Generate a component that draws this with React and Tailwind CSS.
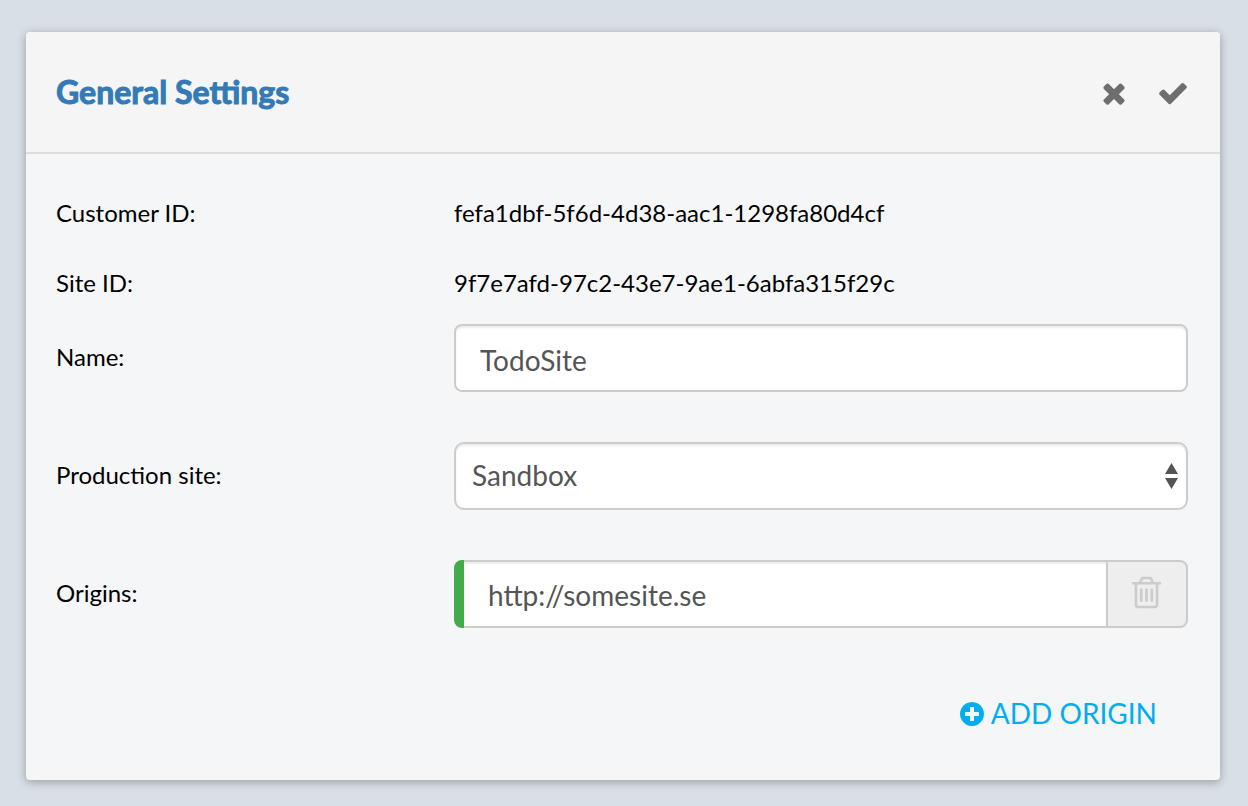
import { useState } from "react";

const ICONS = {
  times:
    "M1490 1322q0 40-28 68l-136 136q-28 28-68 28t-68-28l-294-294-294 294q-28 28-68 28t-68-28l-136-136q-28-28-28-68t28-68l294-294-294-294q-28-28-28-68t28-68l136-136q28-28 68-28t68 28l294 294 294-294q28-28 68-28t68 28l136 136q28 28 28 68t-28 68l-294 294 294 294q28 28 28 68z",
  check:
    "M1671 566q0 40-28 68l-724 724-136 136q-28 28-68 28t-68-28l-136-136-362-362q-28-28-28-68t28-68l136-136q28-28 68-28t68 28l294 295 656-657q28-28 68-28t68 28l136 136q28 28 28 68z",
  trash:
    "M704 736v576q0 14-9 23t-23 9h-64q-14 0-23-9t-9-23v-576q0-14 9-23t23-9h64q14 0 23 9t9 23zm256 0v576q0 14-9 23t-23 9h-64q-14 0-23-9t-9-23v-576q0-14 9-23t23-9h64q14 0 23 9t9 23zm256 0v576q0 14-9 23t-23 9h-64q-14 0-23-9t-9-23v-576q0-14 9-23t23-9h64q14 0 23 9t9 23zm128 724v-948h-896v948q0 22 7 40.5t14.5 27 10.5 8.5h832q3 0 10.5-8.5t14.5-27 7-40.5zm-672-1076h448l-48-117q-7-9-17-11h-317q-10 2-17 11zm928 32v64q0 14-9 23t-23 9h-96v948q0 83-47 143.5t-113 60.5h-832q-66 0-113-58.5t-47-141.5v-952h-96q-14 0-23-9t-9-23v-64q0-14 9-23t23-9h309l70-167q15-37 54-63t79-26h320q40 0 79 26t54 63l70 167h309q14 0 23 9t9 23z",
  plusCircle:
    "M1344 960v-128q0-26-19-45t-45-19h-256v-256q0-26-19-45t-45-19h-128q-26 0-45 19t-19 45v256h-256q-26 0-45 19t-19 45v128q0 26 19 45t45 19h256v256q0 26 19 45t45 19h128q26 0 45-19t19-45v-256h256q26 0 45-19t19-45zm320-64q0 209-103 385.5t-279.5 279.5-385.5 103-385.5-103-279.5-279.5-103-385.5 103-385.5 279.5-279.5 385.5-103 385.5 103 279.5 279.5 103 385.5z",
};

function Icon({ name, className }) {
  return (
    <svg viewBox="0 0 1792 1792" fill="currentColor" aria-hidden="true" className={className}>
      <path d={ICONS[name]} />
    </svg>
  );
}

function InfoRow({ label, value }) {
  return (
    <div className="grid h-[70px] grid-cols-3 items-center">
      <dt className="pl-[30px]">{label}</dt>
      <dd className="col-span-2 pl-[30px]">{value}</dd>
    </div>
  );
}

function FieldRow({ label, htmlFor, children }) {
  return (
    <div className="grid grid-cols-3 items-center">
      <label htmlFor={htmlFor} className="pb-[2px] pl-[30px]">
        {label}
      </label>
      <div className="col-span-2 pr-8 pl-[30px]">{children}</div>
    </div>
  );
}

export default function App() {
  const [name, setName] = useState("TodoSite");
  const [origin, setOrigin] = useState("http://somesite.se");

  return (
    <div className="min-h-screen bg-[#d9dfe7] pt-8 pr-7 pb-[26px] pl-[26px] font-['Lato',sans-serif] text-2xl text-black">
      <main className="overflow-hidden rounded-[4px] bg-[#f4f6f8] shadow-[0_2px_10px_rgba(0,0,0,0.3)]">
        <header className="flex h-[122px] items-center justify-between border-b-2 border-[#dddddd] bg-[#f5f5f5] pr-[31px] pl-[30px]">
          <h1 className="text-[32px] leading-10 font-bold text-[#337ab7] [-webkit-text-stroke:1px_#337ab7]">
            General Settings
          </h1>
          <div className="flex gap-[27px] pt-[2px] text-[#6d6e70]">
            <button type="button" aria-label="Cancel">
              <Icon name="times" className="size-8" />
            </button>
            <button type="button" aria-label="Save">
              <Icon name="check" className="size-8" />
            </button>
          </div>
        </header>

        <form className="pt-6 pb-[46px]" onSubmit={(e) => e.preventDefault()}>
          <dl>
            <InfoRow label="Customer ID:" value="fefa1dbf-5f6d-4d38-aac1-1298fa80d4cf" />
            <InfoRow label="Site ID:" value="9f7e7afd-97c2-43e7-9ae1-6abfa315f29c" />
          </dl>

          <div className="mt-[6px] flex flex-col gap-[50px]">
            <FieldRow label="Name:" htmlFor="name">
              <input
                id="name"
                type="text"
                value={name}
                onChange={(e) => setName(e.target.value)}
                className="block h-[68px] w-full rounded-lg border-2 border-[#cccccc] bg-white px-6 pt-[3px] text-[28px] text-[#555555] shadow-[inset_0_2px_2px_rgba(0,0,0,0.075)]"
              />
            </FieldRow>

            <FieldRow label="Production site:" htmlFor="production-site">
              <div className="relative">
                <select
                  id="production-site"
                  defaultValue="Sandbox"
                  className="block h-[68px] w-full appearance-none rounded-[10px] border-2 border-[#cccccc] bg-white pr-10 pl-4 text-[28px] text-[#555555] shadow-[inset_0_2px_2px_rgba(0,0,0,0.075)]"
                >
                  <option>Sandbox</option>
                </select>
                <svg
                  viewBox="0 0 13 26"
                  aria-hidden="true"
                  className="pointer-events-none absolute top-[21px] right-[10px] h-[26px] w-[13px] fill-[#555555]"
                >
                  <path d="M6.5 0 13 11H0zM0 15h13L6.5 26z" />
                </svg>
              </div>
            </FieldRow>

            <FieldRow label="Origins:" htmlFor="origin">
              <div className="flex h-[68px]">
                <div className="w-[10px] shrink-0 rounded-l-lg bg-[#43ac4a]" />
                <input
                  id="origin"
                  type="text"
                  value={origin}
                  onChange={(e) => setOrigin(e.target.value)}
                  className="min-w-0 flex-1 border-y-2 border-[#cccccc] bg-white px-6 pt-[3px] text-[28px] text-[#555555] shadow-[inset_0_2px_2px_rgba(0,0,0,0.075)]"
                />
                <button
                  type="button"
                  aria-label="Remove origin"
                  className="flex w-[82px] shrink-0 items-center justify-center rounded-r-lg border-2 border-[#cccccc] bg-[#eeeeee] pr-[2px] pb-1 text-[#cccccc]"
                >
                  <Icon name="trash" className="size-[37px]" />
                </button>
              </div>
            </FieldRow>
          </div>

          <div className="mt-[66px] flex justify-end pr-[63px]">
            <button type="button" className="flex h-10 items-center gap-[5px] text-[28px] text-[#00aeef]">
              <Icon name="plusCircle" className="size-7" />
              ADD ORIGIN
            </button>
          </div>
        </form>
      </main>
    </div>
  );
}
